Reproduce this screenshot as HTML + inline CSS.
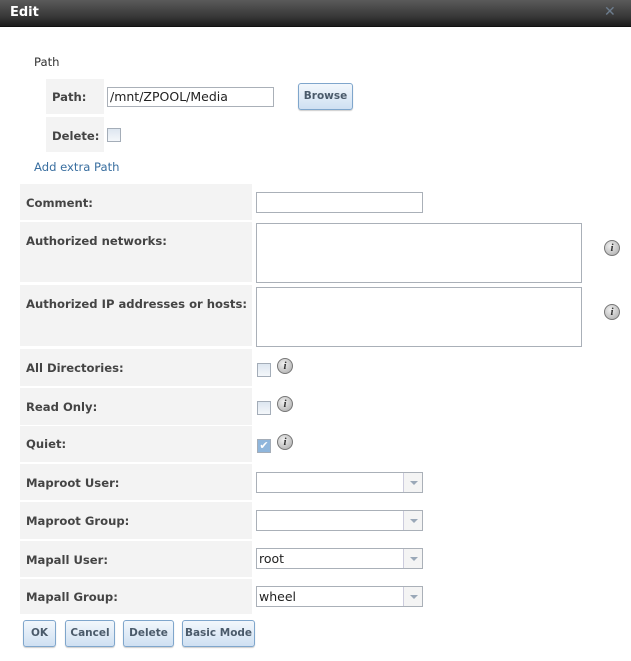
<!DOCTYPE html>
<html><head><style>
*{margin:0;padding:0;box-sizing:border-box}
body{width:631px;height:661px;background:#fff;font-family:"DejaVu Sans","Liberation Sans",sans-serif;font-size:11.6px;color:#333;position:relative;overflow:hidden}
.a{position:absolute}
.tb{left:0;top:0;width:631px;height:27px;background:linear-gradient(#5a5a5a,#3a3a3a 60%,#1c1c1c);border-bottom:1px solid #111}
.tb b{position:absolute;left:10px;top:5px;color:#fff;font-size:13px}
.cell{background:#f3f3f3;font-weight:bold;color:#444}
.cell span{position:absolute;left:6px}
.inp{border:1px solid #aab0b8;background:#fff}
.cb{width:14px;height:14px;border:1px solid #a4adb8;background:linear-gradient(#dde6f0,#f4f7fa)}
.btn{border:1px solid #7fa6cc;border-radius:3px;background:linear-gradient(#f2f7fc,#cfe0f2);font-weight:bold;font-size:10.5px;color:#4a5a6a;text-align:center;line-height:25px;box-shadow:0 1px 1px #ccc}
.sel .ar{position:absolute;right:0;top:0;width:19px;height:100%;border-left:1px solid #ccd;background:#f4f4f4}
.sel .ar:after{content:"";position:absolute;left:6px;top:8px;border:4px solid transparent;border-top:4px solid #9aa8b8}
.info{width:16px;height:16px;border-radius:50%;background:radial-gradient(circle at 40% 35%,#f0f0f0,#a8a8a8);border:1px solid #777;font:italic bold 11px "Liberation Serif",serif;color:#333;text-align:center;line-height:14px}
</style></head><body>
<div class="a tb"><b>Edit</b><span class="a" style="left:604px;top:4px;color:#6d7d8e;font-weight:bold;font-size:14px">✕</span></div>
<div class="a" style="left:34px;top:55px">Path</div>
<div class="a cell" style="left:46px;top:79px;width:58px;height:35px"><span style="top:11px">Path:</span></div>
<div class="a cell" style="left:46px;top:117px;width:58px;height:35px"><span style="top:12px">Delete:</span></div>
<div class="a inp" style="left:107px;top:87px;width:167px;height:20px;padding:1px 2px;font-size:12.5px;color:#222">/mnt/ZPOOL/Media</div>
<div class="a btn" style="left:298px;top:83px;width:55px;height:27px">Browse</div>
<div class="a cb" style="left:107px;top:128px"></div>
<div class="a" style="left:34px;top:160px;color:#3a6fa0">Add extra Path</div>

<div class="a cell" style="left:20px;top:184px;width:232px;height:36px"><span style="top:12px">Comment:</span></div>
<div class="a cell" style="left:20px;top:222px;width:232px;height:60px"><span style="top:12px">Authorized networks:</span></div>
<div class="a cell" style="left:20px;top:285px;width:232px;height:61px"><span style="top:12px">Authorized IP addresses or hosts:</span></div>
<div class="a cell" style="left:20px;top:349px;width:232px;height:37px"><span style="top:12px">All Directories:</span></div>
<div class="a cell" style="left:20px;top:388px;width:232px;height:37px"><span style="top:12px">Read Only:</span></div>
<div class="a cell" style="left:20px;top:426px;width:232px;height:36px"><span style="top:11px">Quiet:</span></div>
<div class="a cell" style="left:20px;top:464px;width:232px;height:36px"><span style="top:12px">Maproot User:</span></div>
<div class="a cell" style="left:20px;top:502px;width:232px;height:37px"><span style="top:12px">Maproot Group:</span></div>
<div class="a cell" style="left:20px;top:541px;width:232px;height:36px"><span style="top:12px">Mapall User:</span></div>
<div class="a cell" style="left:20px;top:579px;width:232px;height:35px"><span style="top:11px">Mapall Group:</span></div>

<div class="a inp" style="left:256px;top:192px;width:167px;height:21px"></div>
<div class="a inp" style="left:256px;top:223px;width:326px;height:60px"></div>
<div class="a info" style="left:604px;top:240px">i</div>
<div class="a inp" style="left:256px;top:287px;width:326px;height:60px"></div>
<div class="a info" style="left:604px;top:304px">i</div>
<div class="a cb" style="left:257px;top:363px"></div><div class="a info" style="left:277px;top:358px">i</div>
<div class="a cb" style="left:257px;top:401px"></div><div class="a info" style="left:277px;top:396px">i</div>
<div class="a cb" style="left:257px;top:439px;background:#8fb6dc;color:#fff;font-size:11px;line-height:12px;text-align:center">✔</div><div class="a info" style="left:277px;top:434px">i</div>

<div class="a inp sel" style="left:256px;top:472px;width:167px;height:21px"><div class="ar"></div></div>
<div class="a inp sel" style="left:256px;top:510px;width:167px;height:21px"><div class="ar"></div></div>
<div class="a inp sel" style="left:256px;top:548px;width:167px;height:21px;padding:2px 2px;font-size:12.5px;color:#222">root<div class="ar"></div></div>
<div class="a inp sel" style="left:256px;top:586px;width:167px;height:21px;padding:2px 2px;font-size:12.5px;color:#222">wheel<div class="ar"></div></div>

<div class="a btn" style="left:23px;top:620px;width:33px;height:27px">OK</div>
<div class="a btn" style="left:65px;top:620px;width:50px;height:27px">Cancel</div>
<div class="a btn" style="left:123px;top:620px;width:51px;height:27px">Delete</div>
<div class="a btn" style="left:182px;top:620px;width:73px;height:27px">Basic Mode</div>
</body></html>
